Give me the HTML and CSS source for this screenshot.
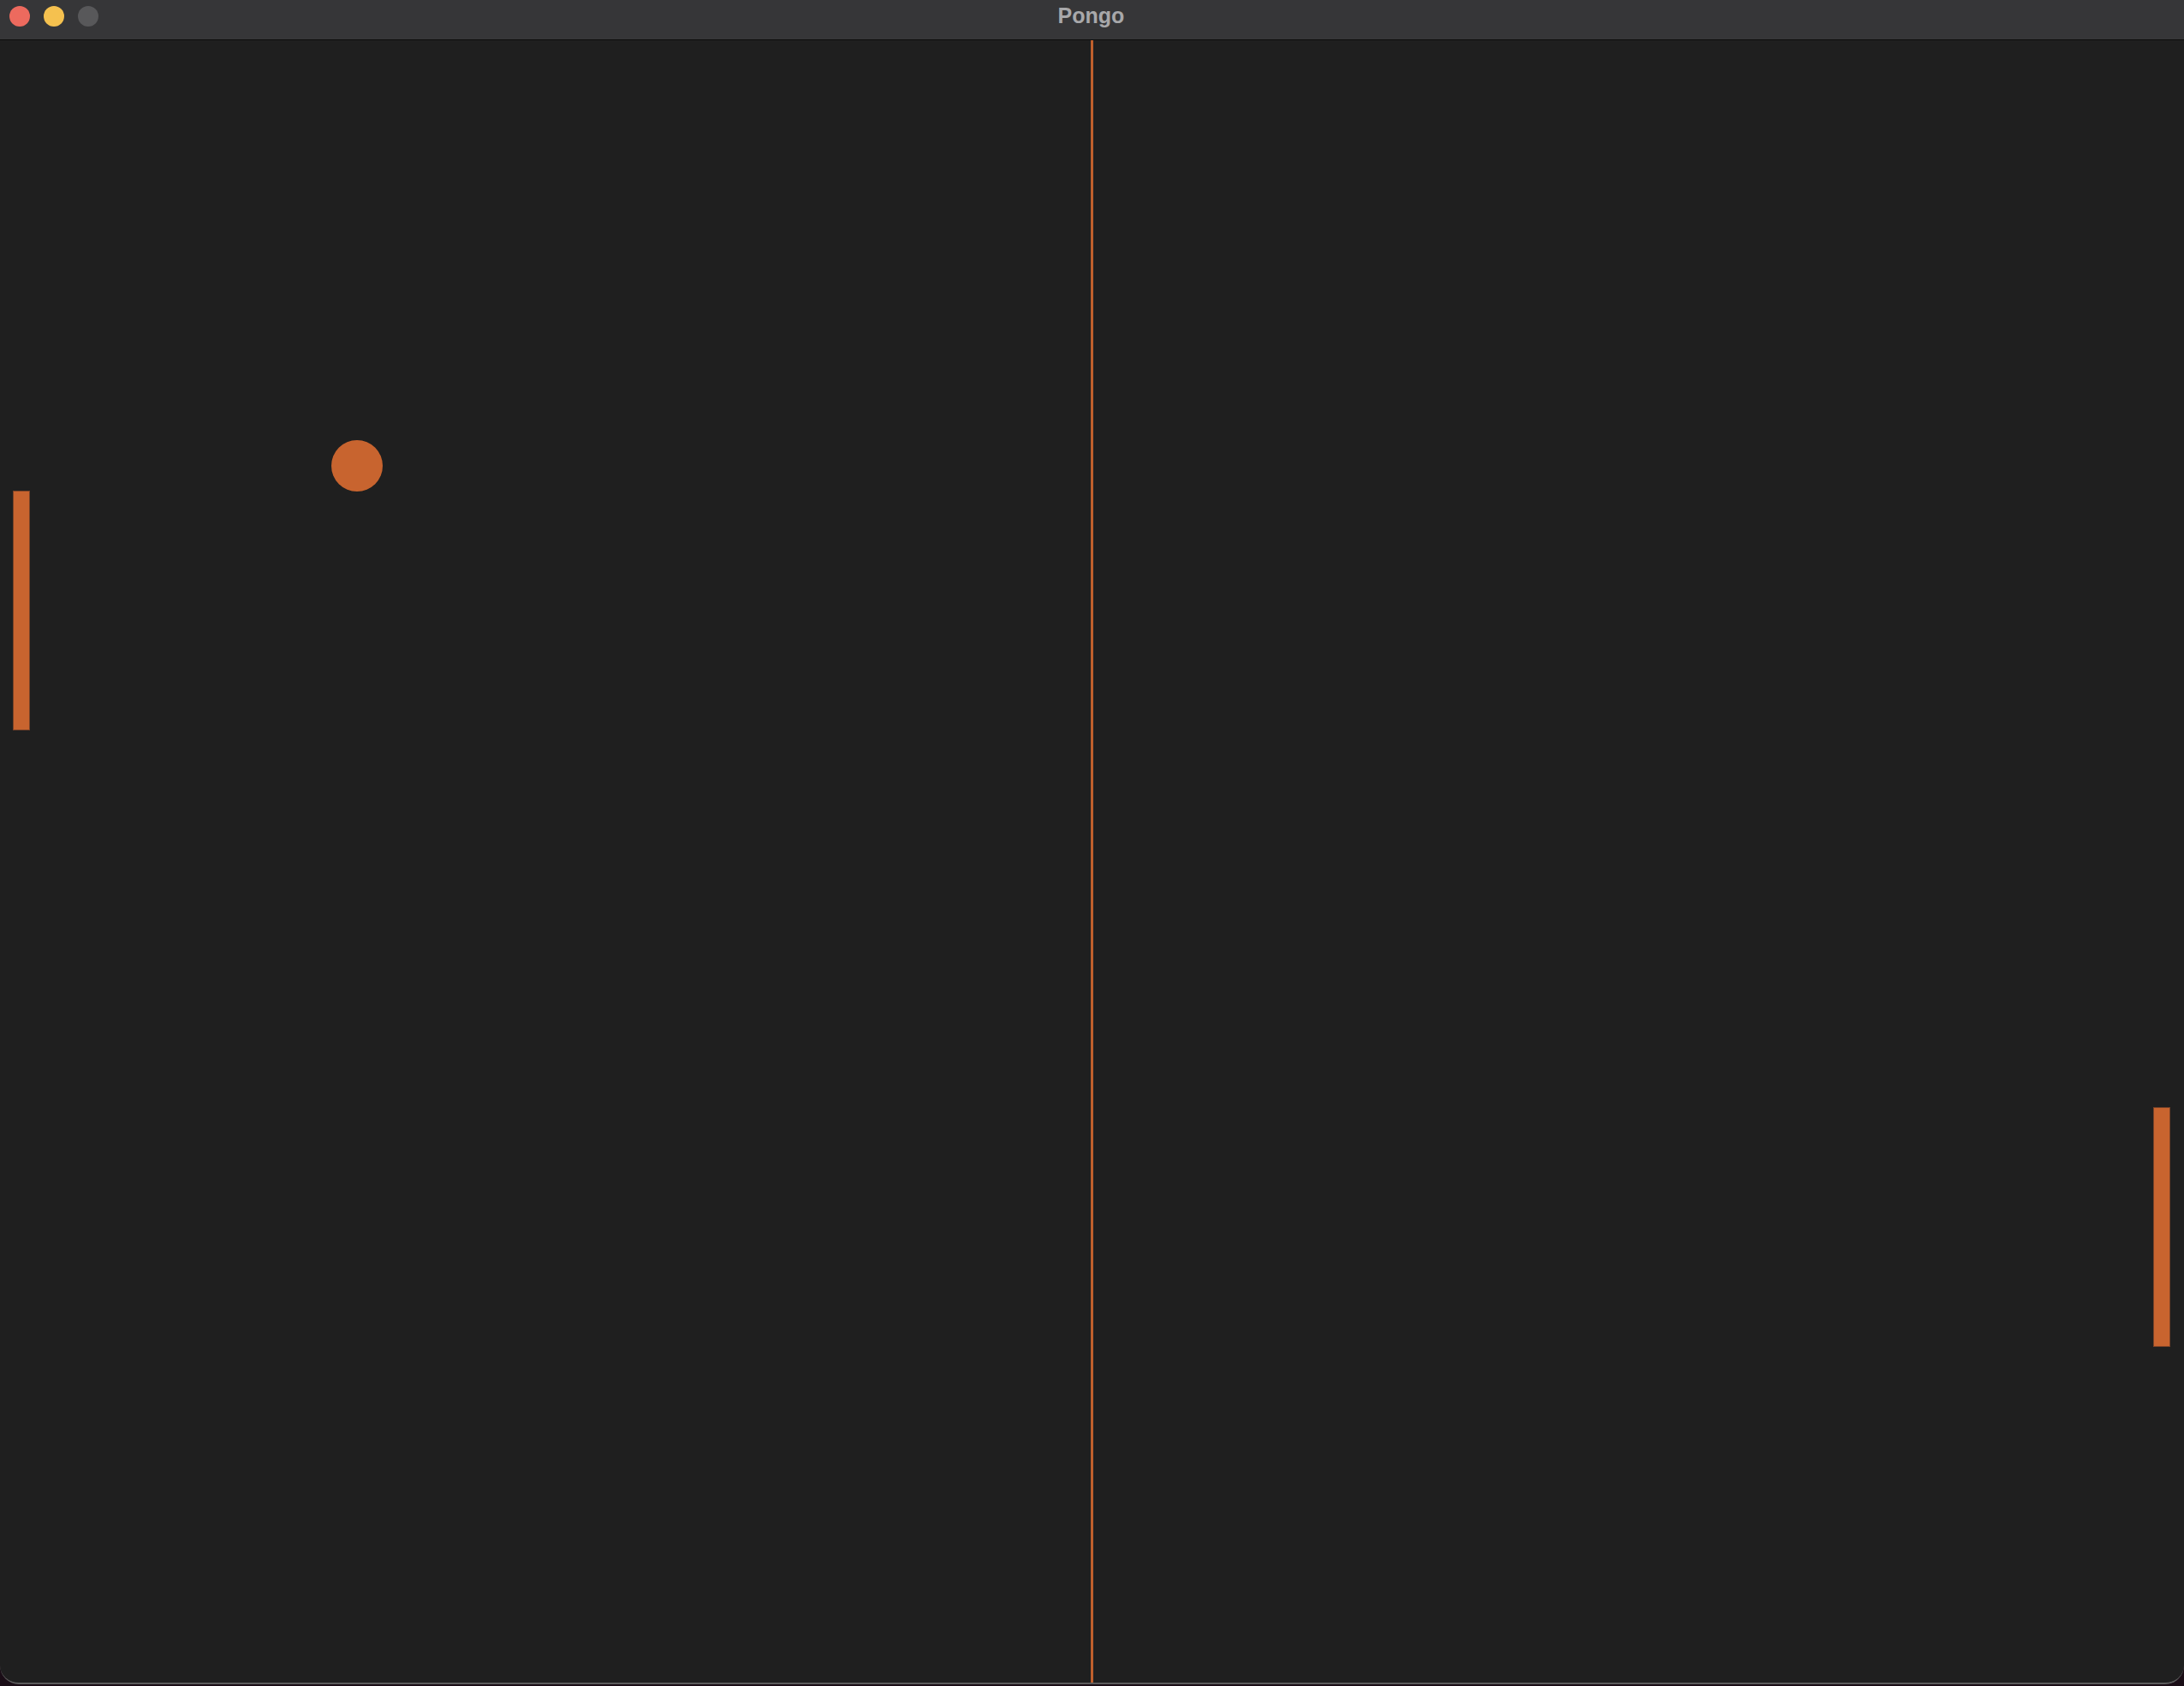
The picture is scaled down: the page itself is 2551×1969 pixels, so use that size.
FILE: index.html
```html
<!DOCTYPE html>
<html lang="en">
<head>
<meta charset="utf-8">
<title>Pongo</title>
<link rel="stylesheet" href="styles.css">
</head>
<body>
<div class="window">
  <header class="titlebar">
    <div class="lights">
      <span class="light close"></span>
      <span class="light minimize"></span>
      <span class="light zoom"></span>
    </div>
    <div class="title">Pongo</div>
  </header>
  <main class="court">
    <div class="net"></div>
    <div class="paddle left"></div>
    <div class="paddle right"></div>
    <div class="ball"></div>
  </main>
</div>
</body>
</html>
```

FILE: styles.css
```css
html, body {
  margin: 0;
  padding: 0;
}
body {
  background: #1a0d16;
  width: 2551px;
  height: 1969px;
  overflow: hidden;
}
.window {
  width: 2551px;
  height: 1967px;
  display: flex;
  flex-direction: column;
  background: #1f1f1f;
  border-radius: 0 0 22px 22px;
  border-bottom: 2px solid #5c5c5c;
  box-sizing: border-box;
  overflow: hidden;
}
.titlebar {
  height: 46px;
  flex: 0 0 46px;
  background: #363638;
  border-bottom: 1px solid #0c0c0c;
  position: relative;
  display: flex;
  align-items: center;
}
.lights {
  display: flex;
  gap: 16px;
  padding-left: 11px;
  margin-top: -8px;
}
.light {
  width: 24px;
  height: 24px;
  border-radius: 50%;
  display: block;
}
.close { background: #ed6a5e; }
.minimize { background: #f5c14f; }
.zoom { background: #58585a; }
.title {
  position: absolute;
  left: 0;
  right: 0;
  top: 3px;
  text-align: center;
  font-family: "Liberation Sans", Arial, sans-serif;
  font-weight: bold;
  font-size: 25px;
  line-height: 30px;
  color: #a8a8aa;
  padding-right: 2px;
}
.court {
  flex: 1;
  position: relative;
}
.net {
  position: absolute;
  left: 1274px;
  top: 0;
  bottom: 0;
  width: 3px;
  background: #bf5f2c;
}
.paddle {
  position: absolute;
  width: 20px;
  height: 280px;
  background: #c8642f;
  box-shadow: inset 0 0 0 1px #7a4227;
  box-sizing: border-box;
}
.paddle.left {
  left: 15px;
  top: 526px;
}
.paddle.right {
  left: 2515px;
  top: 1246px;
}
.ball {
  position: absolute;
  left: 387px;
  top: 467px;
  width: 60px;
  height: 60px;
  border-radius: 50%;
  background: #c8642f;
}
```
